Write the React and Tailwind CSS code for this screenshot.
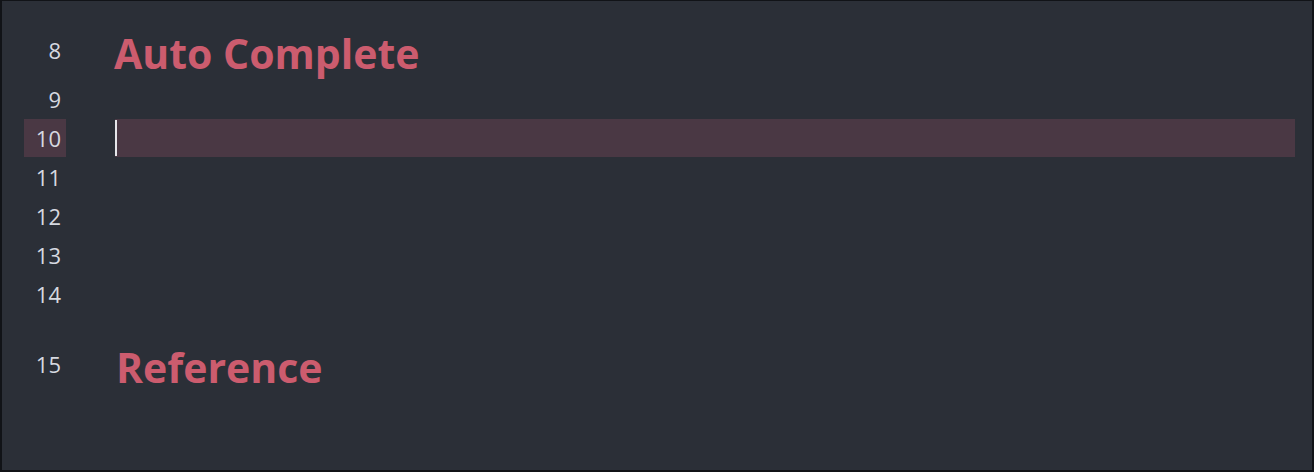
export default function App() {
  const plainRows = [9, 10, 11, 12, 13, 14];

  return (
    <div
      className="h-[472px] w-full overflow-hidden border-x-2 border-t border-b-2 border-[#111317] bg-[#2b2f37] text-[#d6d9e0]"
      style={{ fontFamily: '"Open Sans", "Noto Sans", sans-serif' }}
    >
      {/* line 8: heading */}
      <div className="flex h-[79px]">
        <div className="w-[64px] shrink-0 pl-[22px]">
          <div className="mt-[30px] w-[42px] pr-[5px] text-right text-[22px] leading-[39px]">8</div>
        </div>
        <h1 className="ml-[48px] pt-[32px] text-[41px] font-bold leading-[41px] text-[#cc5c6e]">
          Auto Complete
        </h1>
      </div>

      {/* lines 9 - 14 */}
      {plainRows.map((n) => {
        const active = n === 10;
        return (
          <div key={n} className="flex h-[39px]">
            <div className="w-[64px] shrink-0 pl-[22px]">
              <div
                className={
                  active
                    ? "h-[38px] w-[42px] bg-[#4a3844] pr-[5px] text-right text-[22px] leading-[38px]"
                    : "w-[42px] pr-[5px] text-right text-[22px] leading-[39px]"
                }
              >
                {n}
              </div>
            </div>
            <div className="ml-[49px] mr-[17px] flex-1">
              {active && (
                <div className="flex h-[38px] items-stretch bg-[#4a3844]">
                  <span className="my-[1px] w-[2px] bg-[#e6e6ea]" />
                </div>
              )}
            </div>
          </div>
        );
      })}

      {/* line 15: heading */}
      <div className="flex h-[90px]">
        <div className="w-[64px] shrink-0 pl-[22px]">
          <div className="mt-[31px] w-[42px] pr-[5px] text-right text-[22px] leading-[39px]">15</div>
        </div>
        <h2 className="ml-[50px] pt-[33px] text-[41px] font-bold leading-[41px] text-[#cc5c6e]">
          Reference
        </h2>
      </div>
    </div>
  );
}
